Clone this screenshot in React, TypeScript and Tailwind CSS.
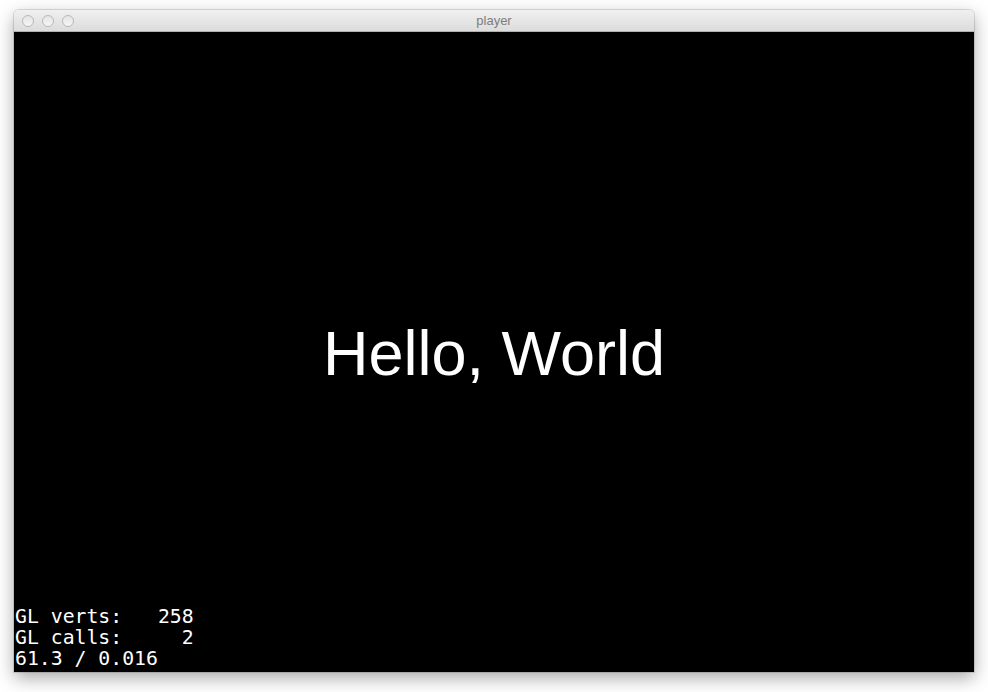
export default function App() {
  const stats = [
    "GL verts:   258",
    "GL calls:     2",
    "61.3 / 0.016",
  ]

  return (
    <div className="w-[988px] h-[692px] bg-white pt-[10px] px-[14px] pb-[20px]">
      <div className="flex flex-col h-[662px] rounded-t-[5px] overflow-hidden shadow-[0_6px_18px_rgba(0,0,0,0.35),0_0_0_1px_rgba(0,0,0,0.12)]">
        {/* title bar */}
        <div className="relative h-[22px] shrink-0 flex items-center bg-gradient-to-b from-[#f0f0f0] to-[#dcdcdc] border-b border-[#b0b0b0]">
          <div className="flex items-center gap-[8px] pl-[8px]">
            <span className="w-[12px] h-[12px] rounded-full border border-[#b8b8b8] bg-gradient-to-b from-[#e4e4e4] to-[#f6f6f6]" />
            <span className="w-[12px] h-[12px] rounded-full border border-[#b8b8b8] bg-gradient-to-b from-[#e4e4e4] to-[#f6f6f6]" />
            <span className="w-[12px] h-[12px] rounded-full border border-[#b8b8b8] bg-gradient-to-b from-[#e4e4e4] to-[#f6f6f6]" />
          </div>
          <div className="absolute inset-0 flex items-center justify-center pt-[1px] text-[13px] text-[#7d7d7d] font-['Liberation_Sans',sans-serif]">
            player
          </div>
        </div>

        {/* GL view: label centred, stats pinned bottom-left in the same cell */}
        <div className="flex-1 bg-black grid">
          <span className="col-start-1 row-start-1 self-center justify-self-center text-[63px] leading-none text-white font-['Liberation_Sans',Arial,sans-serif] pt-[2px]">
            Hello, World
          </span>
          <div className="col-start-1 row-start-1 self-end justify-self-start pl-[1px] pb-[3px] font-['DejaVu_Sans_Mono',monospace] text-[19.8px] leading-[21px] text-white whitespace-pre">
            {stats.map((s) => (
              <div key={s}>{s}</div>
            ))}
          </div>
        </div>
      </div>
    </div>
  )
}
